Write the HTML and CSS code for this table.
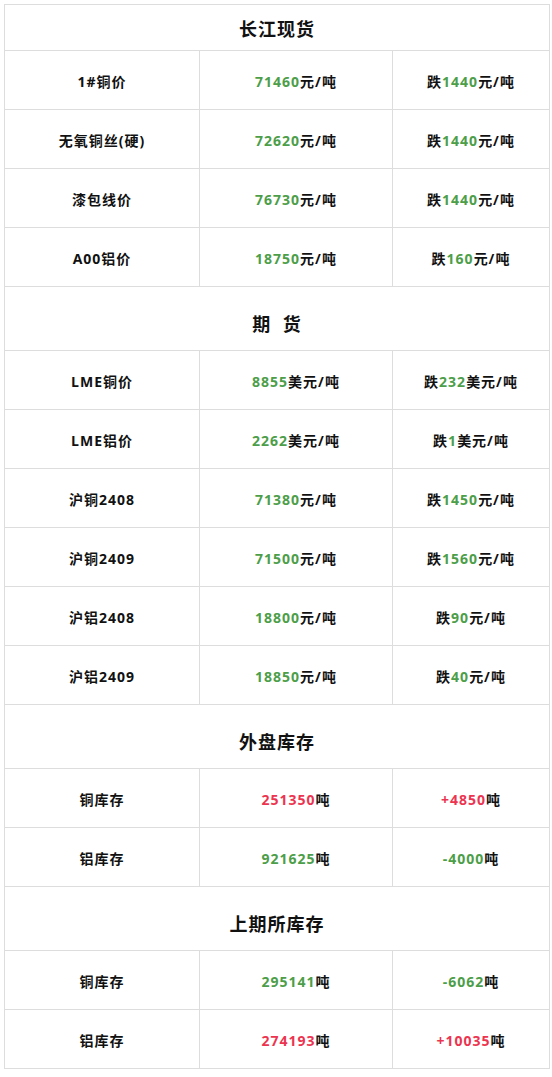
FILE: index.html
```html
<!DOCTYPE html>
<html lang="zh-CN">
<head>
<meta charset="utf-8">
<title>行情</title>
<link rel="stylesheet" href="styles.css">
</head>
<body>
<table class="quote">
  <colgroup><col class="c1"><col class="c2"><col class="c3"></colgroup>
  <tr class="head first"><td colspan="3">长江现货</td></tr>
  <tr><td>1#铜价</td><td><span class="g">71460</span>元/吨</td><td>跌<span class="g">1440</span>元/吨</td></tr>
  <tr><td>无氧铜丝(硬)</td><td><span class="g">72620</span>元/吨</td><td>跌<span class="g">1440</span>元/吨</td></tr>
  <tr><td>漆包线价</td><td><span class="g">76730</span>元/吨</td><td>跌<span class="g">1440</span>元/吨</td></tr>
  <tr><td>A00铝价</td><td><span class="g">18750</span>元/吨</td><td>跌<span class="g">160</span>元/吨</td></tr>
  <tr class="head"><td colspan="3">期&nbsp;&nbsp;货</td></tr>
  <tr><td>LME铜价</td><td><span class="g">8855</span>美元/吨</td><td>跌<span class="g">232</span>美元/吨</td></tr>
  <tr><td>LME铝价</td><td><span class="g">2262</span>美元/吨</td><td>跌<span class="g">1</span>美元/吨</td></tr>
  <tr><td>沪铜2408</td><td><span class="g">71380</span>元/吨</td><td>跌<span class="g">1450</span>元/吨</td></tr>
  <tr><td>沪铜2409</td><td><span class="g">71500</span>元/吨</td><td>跌<span class="g">1560</span>元/吨</td></tr>
  <tr><td>沪铝2408</td><td><span class="g">18800</span>元/吨</td><td>跌<span class="g">90</span>元/吨</td></tr>
  <tr><td>沪铝2409</td><td><span class="g">18850</span>元/吨</td><td>跌<span class="g">40</span>元/吨</td></tr>
  <tr class="head"><td colspan="3">外盘库存</td></tr>
  <tr><td>铜库存</td><td><span class="r">251350</span>吨</td><td><span class="r">+4850</span>吨</td></tr>
  <tr><td>铝库存</td><td><span class="g">921625</span>吨</td><td><span class="g">-4000</span>吨</td></tr>
  <tr class="head"><td colspan="3">上期所库存</td></tr>
  <tr><td>铜库存</td><td><span class="g">295141</span>吨</td><td><span class="g">-6062</span>吨</td></tr>
  <tr><td>铝库存</td><td><span class="r">274193</span>吨</td><td><span class="r">+10035</span>吨</td></tr>
</table>
</body>
</html>
```
FILE: styles.css
```css
html, body {
  margin: 0;
  padding: 0;
  background: #ffffff;
}
body {
  padding: 4px;
  font-family: "Open Sans", "Noto Sans CJK SC", sans-serif;
  color: #111111;
}
.quote {
  width: 545px;
  border-collapse: collapse;
  table-layout: fixed;
}
.c1 { width: 195px; }
.c2 { width: 193px; }
.c3 { width: 157px; }
.quote td {
  border: 1px solid #dddddd;
  height: 59px;
  padding: 3px 0 0 0;
  text-align: center;
  vertical-align: middle;
  font-size: 14px;
  font-weight: 700;
  letter-spacing: 1px;
  line-height: 20px;
  box-sizing: border-box;
}
.quote tr.head td {
  height: 64px;
  padding: 10px 0 0 0;
  font-size: 18px;
  letter-spacing: 1px;
  line-height: 26px;
}
.quote tr.head.first td {
  height: 46px;
  padding: 2px 0 0 0;
}
.g { color: #4c9e49; }
.r { color: #ec3450; }
```
